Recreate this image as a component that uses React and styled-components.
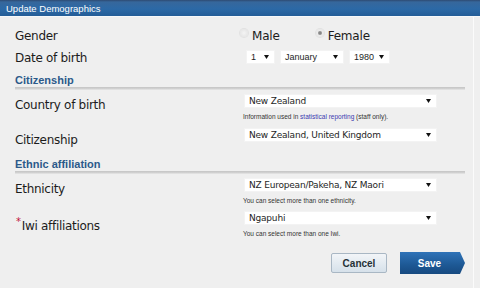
import React from 'react';
import styled, { createGlobalStyle } from 'styled-components';

const GlobalStyle = createGlobalStyle`
  html, body {
    margin: 0;
    padding: 0;
    background: #efefef;
  }
  body {
    font-family: "DejaVu Sans", Verdana, sans-serif;
  }
`;

const Dialog = styled.div`
  width: 480px;
  height: 288px;
  box-sizing: border-box;
  background: linear-gradient(#f5f1ee 0px, #efefef 12px);
  overflow: hidden;
`;

const TitleBar = styled.div`
  height: 17px;
  box-sizing: border-box;
  padding: 3px 0 0 6px;
  background: linear-gradient(#2e4a72 0px, #36679c 2px, #2c69a6 9px, #245d97 16px);
  border-bottom: 1px solid #f6f8fa;
  color: #ffffff;
  font-family: "Liberation Sans", Arial, sans-serif;
  font-size: 9.5px;
  line-height: 12px;
`;

const Body = styled.div`
  padding: 6px 0 0 15px;
  margin-right: 6px;
  border-right: 1px solid #fbfbfb;
  height: 271px;
  box-sizing: border-box;
`;

const Row = styled.div`
  display: grid;
  grid-template-columns: 229px 193px;
  align-items: start;
  margin-top: ${(p) => p.$top || 0}px;
`;

const Label = styled.div`
  font-family: "DejaVu Sans", Verdana, sans-serif;
  font-size: 12px;
  letter-spacing: -0.3px;
  line-height: 16px;
  color: #1c1c1c;
  padding-top: ${(p) => p.$pad || 0}px;
`;

const Required = styled.span`
  color: #c0143c;
  font-size: 10px;
  vertical-align: 5px;
  margin-right: 1px;
  margin-left: 1px;
`;

const Control = styled.div`
  display: flex;
  flex-direction: column;
`;

const RadioGroup = styled.div`
  display: flex;
  align-items: center;
  gap: 36px;
  margin-left: -4px;
  height: 20px;
`;

const RadioOption = styled.label`
  display: flex;
  align-items: center;
  gap: 4px;
  font-family: "DejaVu Sans", Verdana, sans-serif;
  font-size: 12px;
  letter-spacing: -0.2px;
  color: #1c1c1c;
`;

const RadioDot = styled.span`
  width: 8px;
  height: 8px;
  border-radius: 50%;
  margin-top: -6px;
  background: radial-gradient(circle at 50% 50%, ${(p) => (p.$checked ? '#777 0, #999 1.5px, #ececec 2.5px' : '#f4f4f4 0')}, #e0e0e0 100%);
  box-shadow: 0 0 0 1px #e2e2e2;
`;

const SelectLine = styled.div`
  display: flex;
  gap: ${(p) => p.$gap || 0}px;
  margin-left: ${(p) => p.$shift || 0}px;
`;

const Select = styled.div`
  width: ${(p) => p.$w}px;
  height: 14px;
  box-sizing: border-box;
  background: #ffffff;
  border: 1px solid #f3f3f3;
  display: flex;
  align-items: center;
  justify-content: space-between;
  padding: 0 5px 0 4px;
  font-family: ${(p) => (p.$narrow ? '"Liberation Sans", Arial' : '"DejaVu Sans", Verdana')}, sans-serif;
  font-size: 9px;
  letter-spacing: ${(p) => (p.$narrow ? 0 : -0.2)}px;
  color: #1e1e1e;
  white-space: nowrap;
`;

const Arrow = () => (
  <svg width="5" height="4" viewBox="0 0 5 4">
    <path d="M0 0 L5 0 L2.5 4 Z" fill="#111" />
  </svg>
);

const Help = styled.div`
  font-family: "Liberation Sans", Arial, sans-serif;
  font-size: 6.5px;
  line-height: 9px;
  color: #333;
  margin-top: 4px;
  margin-left: -1px;
`;

const HelpLink = styled.span`
  color: #3b3bb0;
`;

const Section = styled.div`
  margin-top: ${(p) => p.$top || 0}px;
  width: 450px;
`;

const SectionTitle = styled.div`
  font-family: "Liberation Sans", Arial, sans-serif;
  font-weight: bold;
  font-size: 11px;
  line-height: 14px;
  color: #2c5a8a;
`;

const SectionRule = styled.div`
  height: 3px;
  background: linear-gradient(#c4c4c4, #d3d3d3 66%, #ececec);
`;

const Actions = styled.div`
  display: flex;
  justify-content: flex-end;
  align-items: center;
  gap: 13px;
  margin-top: 14px;
  width: 450px;
`;

const CancelButton = styled.button`
  width: 56px;
  height: 20px;
  border: 1px solid #a9b7c4;
  border-radius: 2px;
  background: linear-gradient(#f2f5f8, #d6e1ea);
  font-family: "Liberation Sans", Arial, sans-serif;
  font-weight: bold;
  font-size: 10px;
  color: #263238;
  padding: 0;
`;

const SaveButton = styled.button`
  width: 65px;
  height: 22px;
  border: none;
  clip-path: polygon(0 0, 60px 0, 65px 11px, 60px 22px, 0 22px);
  background: linear-gradient(#2f73b8, #1d5894 60%, #174a80);
  font-family: "Liberation Sans", Arial, sans-serif;
  font-weight: bold;
  font-size: 10px;
  color: #ffffff;
  padding: 0 6px 0 0;
`;

export default function App() {
  return (
    <Dialog>
      <GlobalStyle />
      <TitleBar>Update Demographics</TitleBar>
      <Body>
        <Row $top={3}>
          <Label $pad={2}>Gender</Label>
          <RadioGroup>
            <RadioOption>
              <RadioDot />
              Male
            </RadioOption>
            <RadioOption>
              <RadioDot $checked />
              Female
            </RadioOption>
          </RadioGroup>
        </Row>
        <Row $top={4}>
          <Label $pad={-2}>Date of birth</Label>
          <SelectLine $gap={5} $shift={2}>
            <Select $w={29} $narrow>1<Arrow /></Select>
            <Select $w={64} $narrow>January<Arrow /></Select>
            <Select $w={41} $narrow>1980<Arrow /></Select>
          </SelectLine>
        </Row>
        <Section $top={7}>
          <SectionTitle>Citizenship</SectionTitle>
          <SectionRule />
        </Section>
        <Row $top={4}>
          <Label $pad={3}>Country of birth</Label>
          <Control>
            <Select $w={193}>New Zealand<Arrow /></Select>
            <Help>
              Information used in <HelpLink>statistical reporting</HelpLink> (staff only).
            </Help>
          </Control>
        </Row>
        <Row $top={7}>
          <Label $pad={4}>Citizenship</Label>
          <Select $w={193}>New Zealand, United Kingdom<Arrow /></Select>
        </Row>
        <Section $top={9}>
          <SectionTitle>Ethnic affiliation</SectionTitle>
          <SectionRule />
        </Section>
        <Row $top={4}>
          <Label $pad={3}>Ethnicity</Label>
          <Control>
            <Select $w={193}>NZ European/Pakeha, NZ Maori<Arrow /></Select>
            <Help>You can select more than one ethnicity.</Help>
          </Control>
        </Row>
        <Row $top={6}>
          <Label $pad={3}>
            <Required>*</Required>Iwi affiliations
          </Label>
          <Control>
            <Select $w={193}>Ngapuhi<Arrow /></Select>
            <Help>You can select more than one Iwi.</Help>
          </Control>
        </Row>
        <Actions>
          <CancelButton>Cancel</CancelButton>
          <SaveButton>Save</SaveButton>
        </Actions>
      </Body>
    </Dialog>
  );
}
